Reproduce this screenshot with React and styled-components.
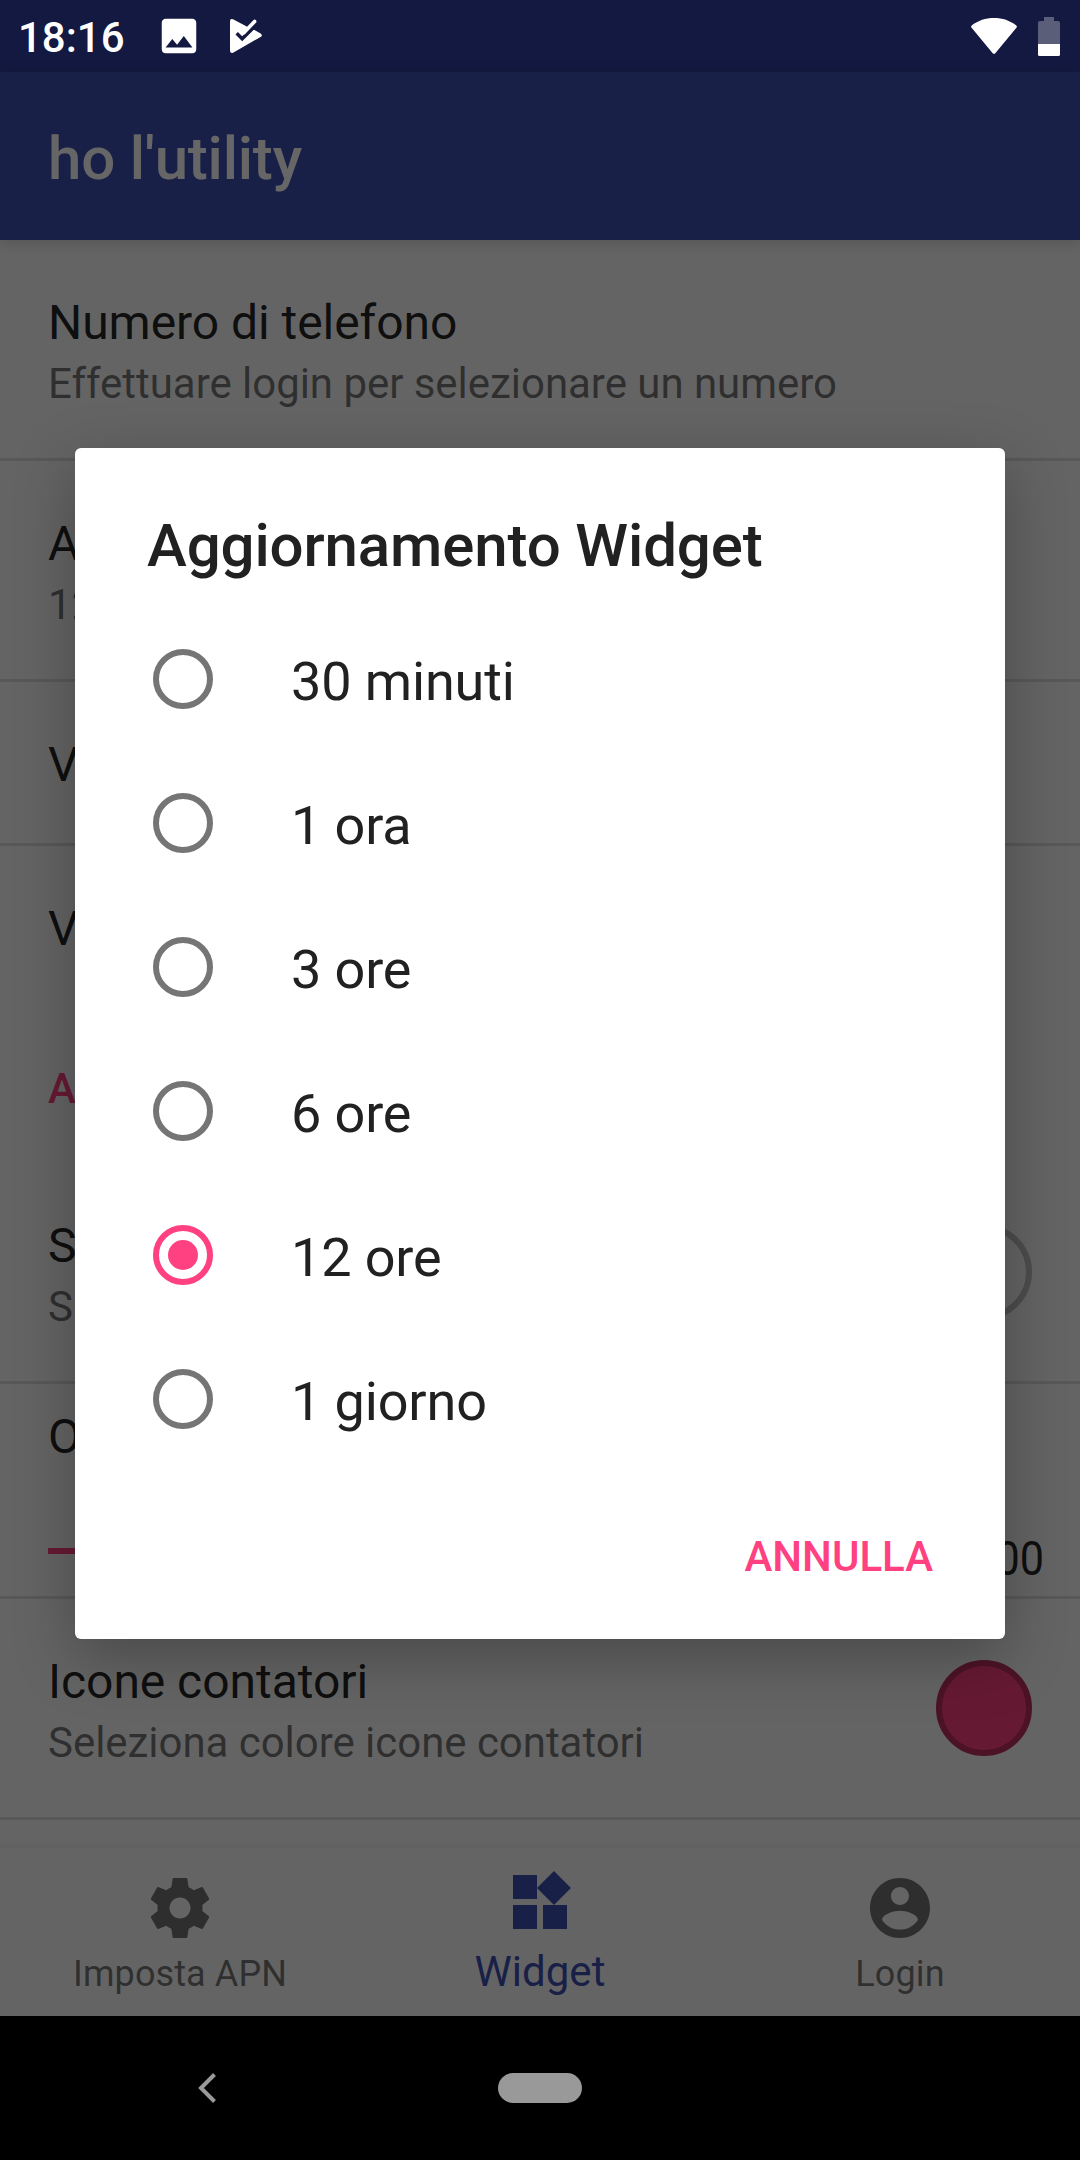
import React from "react";
import styled, { createGlobalStyle } from "styled-components";

const GlobalStyle = createGlobalStyle`
  * { box-sizing: border-box; }
  html, body { margin: 0; padding: 0; background: #000; }
  body { font-family: Roboto, sans-serif; font-weight: 400; overflow: hidden; }
  svg { display: block; flex: none; }
`;

const Device = styled.div`
  width: 1080px;
  height: 2160px;
  display: flex;
  flex-direction: column;
  overflow: hidden;
`;

const StatusBar = styled.header`
  flex: none;
  height: 72px;
  display: flex;
  align-items: center;
  padding: 0 20px 0 18px;
  background: #131940;
  color: #fff;
`;

const Clock = styled.span`
  width: 138px;
  font-size: 42px;
  font-weight: 500;
  line-height: 50px;
  padding-top: 4px;
  white-space: nowrap;
`;

const NotificationIcons = styled.div`
  flex: 1;
  display: flex;
  align-items: center;
  gap: 21px;
`;

const SystemIcons = styled.div`
  display: flex;
  align-items: center;
  gap: 21px;
`;

const AppWindow = styled.div`
  flex: none;
  position: relative;
  height: 1944px;
  display: flex;
  flex-direction: column;
  background: #fafafa;
`;

const AppBar = styled.div`
  flex: none;
  position: relative;
  height: 168px;
  display: flex;
  align-items: center;
  padding: 6px 48px 0;
  background: #3f51b5;
  box-shadow: 0 3px 14px rgba(0, 0, 0, 0.16);
`;

const AppTitle = styled.h1`
  margin: 0;
  font-size: 60px;
  font-weight: 500;
  line-height: 70px;
  letter-spacing: -0.2px;
  color: #fff;
`;

const Preferences = styled.main`
  flex: 1;
  min-height: 0;
  overflow: hidden;
`;

const Preference = styled.div`
  display: flex;
  justify-content: space-between;
  height: ${(p) => p.$height}px;
  padding: 55px 48px 0;
  border-bottom: 3px solid ${(p) => (p.$last ? "transparent" : "rgba(0, 0, 0, 0.12)")};
`;

const PreferenceTitle = styled.div`
  font-size: 48px;
  line-height: 56px;
  letter-spacing: -0.05px;
  color: rgba(0, 0, 0, 0.87);
  white-space: nowrap;
`;

const PreferenceSummary = styled.div`
  margin-top: 8px;
  font-size: 42px;
  line-height: 50px;
  letter-spacing: -0.04px;
  color: rgba(0, 0, 0, 0.54);
  white-space: nowrap;
`;

const ColorSwatch = styled.div`
  flex: none;
  width: 96px;
  height: 96px;
  margin-top: 6px;
  border-radius: 50%;
  background: ${(p) => p.$fill};
  border: 6px solid ${(p) => p.$edge};
`;

const Category = styled.div`
  height: 153px;
  padding: 54px 48px 0;
  font-size: 42px;
  font-weight: 500;
  line-height: 50px;
  color: #ff4081;
`;

const SliderPreference = styled.div`
  height: 215px;
  padding: 25px 36px 0 48px;
  border-bottom: 3px solid rgba(0, 0, 0, 0.12);
`;

const SliderRow = styled.div`
  display: flex;
  align-items: center;
  gap: 24px;
  margin-top: 59px;
  height: 70px;
`;

const SliderTrack = styled.div`
  flex: 1;
  height: 6px;
  margin-bottom: 16px;
  background: #ff4081;
`;

const SliderValue = styled.div`
  font-size: 48px;
  line-height: 56px;
  color: rgba(0, 0, 0, 0.87);
  transform: scaleX(0.9);
  transform-origin: right center;
`;

const BottomNav = styled.nav`
  flex: none;
  height: 168px;
  display: grid;
  grid-template-columns: repeat(3, 1fr);
  background: #fafafa;
  box-shadow: 0 -1px 8px rgba(0, 0, 0, 0.07);
  position: relative;
`;

const NavItem = styled.div`
  display: flex;
  flex-direction: column;
  align-items: center;
  padding-top: ${(p) => (p.$active ? 18 : 24)}px;
  color: ${(p) => (p.$active ? "#3f51b5" : "rgba(0, 0, 0, 0.54)")};
`;

const NavLabel = styled.span`
  margin-top: 9px;
  font-size: ${(p) => (p.$active ? 42 : 36)}px;
  line-height: ${(p) => (p.$active ? 50 : 42)}px;
  letter-spacing: ${(p) => (p.$active ? 0 : 0.1)}px;
  white-space: nowrap;
`;

const Scrim = styled.div`
  position: absolute;
  inset: 0;
  display: flex;
  justify-content: center;
  align-items: flex-start;
  padding-top: 376px;
  background: rgba(0, 0, 0, 0.6);
`;

const Dialog = styled.section`
  width: 930px;
  height: 1191px;
  display: flex;
  flex-direction: column;
  background: #fff;
  border-radius: 6px;
  box-shadow: 0 18px 62px rgba(0, 0, 0, 0.28);
  color: #212121;
`;

const DialogTitle = styled.h2`
  margin: 0;
  padding: 63px 72px 29px;
  font-size: 60px;
  font-weight: 500;
  line-height: 70px;
  letter-spacing: -0.13px;
`;

const Option = styled.label`
  display: flex;
  align-items: center;
  gap: 78px;
  height: 144px;
  padding-left: 78px;
  font-size: 54px;
  line-height: 64px;
  letter-spacing: -0.13px;
`;

const Radio = styled.span`
  width: 60px;
  height: 60px;
  margin-bottom: 6px;
  display: grid;
  place-items: center;
  border-radius: 50%;
  border: 6px solid ${(p) => (p.$checked ? "#ff4081" : "#757575")};

  &::after {
    content: "";
    width: 30px;
    height: 30px;
    border-radius: 50%;
    background: ${(p) => (p.$checked ? "#ff4081" : "transparent")};
  }
`;

const DialogActions = styled.div`
  display: flex;
  justify-content: flex-end;
  padding: 58px 72px 0;
`;

const TextButton = styled.button`
  border: 0;
  padding: 0;
  background: none;
  font: 500 42px/50px Roboto, sans-serif;
  color: #ff4081;
`;

const NavigationBar = styled.footer`
  flex: none;
  height: 144px;
  display: grid;
  grid-template-columns: 414px 252px 414px;
  align-items: center;
  justify-items: center;
  background: #000;
`;

const HomePill = styled.div`
  width: 84px;
  height: 30px;
  border-radius: 15px;
  background: #999;
`;

const PictureIcon = () => (
  <svg width="46" height="46" viewBox="0 0 24 24" fill="#fff">
    <path d="M21 19V5c0-1.1-.9-2-2-2H5c-1.1 0-2 .9-2 2v14c0 1.1.9 2 2 2h14c1.1 0 2-.9 2-2zM8.5 13.5l2.5 3.01L14.5 12l4.5 6H5l3.500-4.500z" />
  </svg>
);

const PlayCheckIcon = () => (
  <svg width="46" height="46" viewBox="0 0 46 46">
    <path
      d="M7 8Q7 5.200 10 6.200L23.300 13.200L26 16L31.500 17L37.600 20.400Q40.200 22.200 37.600 24L10.500 39.400Q7 41 7 37.500Z"
      fill="#fff"
    />
    <path d="M13.700 20.300L19.200 25.800L32.500 12.500" fill="none" stroke="#131940" strokeWidth="3.400" />
    <path d="M20.800 19.700L31.600 8.400" fill="none" stroke="#fff" strokeWidth="3.600" strokeLinecap="round" />
  </svg>
);

const WifiIcon = () => (
  <svg width="46" height="36" viewBox="0 0 46 36">
    <path
      d="M1 7.200C7 2.600 14.500 0 23 0s16 2.600 22 7.200q1.600 1.200.4 2.600L24.500 35q-1.500 1.700-3 0L.6 9.800Q-.6 8.400 1 7.200z"
      fill="#fff"
    />
  </svg>
);

const BatteryIcon = () => (
  <svg width="22" height="39" viewBox="0 0 22 39">
    <path d="M6 0h10v4h4q2 0 2 2v21H0V6q0-2 2-2h4z" fill="#fff" fillOpacity=".3" />
    <path d="M0 27h22v10.500q0 1.500-1.500 1.500h-19Q0 39 0 37.500z" fill="#fff" />
  </svg>
);

const BackIcon = () => (
  <svg width="20" height="32" viewBox="0 0 20 32">
    <path d="M17.500 2.500L4 16L17.500 29.500" fill="none" stroke="#999" strokeWidth="4" />
  </svg>
);

const icons = {
  settings:
    "M19.43 12.98c.04-.32.07-.64.07-.98s-.03-.66-.07-.98l2.110-1.650c.19-.15.24-.42.12-.64l-2-3.460c-.12-.22-.39-.3-.61-.22l-2.490 1c-.52-.4-1.080-.73-1.690-.98l-.38-2.650C14.460 2.180 14.250 2 14 2h-4c-.25 0-.46.18-.49.42l-.38 2.650c-.61.25-1.170.59-1.690.98l-2.490-1c-.23-.09-.49 0-.61.22l-2 3.460c-.13.22-.07.49.12.64l2.110 1.650c-.04.32-.07.65-.07.98s.03.66.07.98l-2.110 1.650c-.19.15-.24.42-.12.64l2 3.460c.12.22.39.3.61.22l2.490-1c.52.4 1.080.73 1.690.98l.38 2.650c.03.24.24.42.49.42h4c.25 0 .46-.18.49-.42l.38-2.650c.61-.25 1.170-.59 1.690-.98l2.490 1c.23.09.49 0 .61-.22l2-3.460c.12-.22.07-.49-.12-.64l-2.110-1.650zM12 15.500c-1.930 0-3.500-1.570-3.500-3.500s1.570-3.500 3.500-3.500 3.500 1.570 3.500 3.500-1.570 3.500-3.500 3.500z",
  widgets:
    "M13 13v8h8v-8h-8zM3 21h8v-8H3v8zM3 3v8h8V3H3zm13.660-1.310L11 7.340 16.660 13l5.660-5.660-5.660-5.650z",
  account:
    "M12 2C6.480 2 2 6.480 2 12s4.480 10 10 10 10-4.480 10-10S17.520 2 12 2zm0 3c1.660 0 3 1.340 3 3s-1.340 3-3 3-3-1.340-3-3 1.340-3 3-3zm0 14.200c-2.500 0-4.710-1.280-6-3.220.03-1.990 4-3.080 6-3.080 1.990 0 5.970 1.090 6 3.080-1.290 1.940-3.500 3.220-6 3.220z",
};

const navItems = [
  { label: "Imposta APN", icon: "settings" },
  { label: "Widget", icon: "widgets", active: true },
  { label: "Login", icon: "account" },
];

const options = ["30 minuti", "1 ora", "3 ore", "6 ore", "12 ore", "1 giorno"];

function PreferenceItem({ title, summary, height = 221, last, children }) {
  return (
    <Preference $height={height} $last={last}>
      <div>
        <PreferenceTitle>{title}</PreferenceTitle>
        {summary && <PreferenceSummary>{summary}</PreferenceSummary>}
      </div>
      {children}
    </Preference>
  );
}

export default function App() {
  return (
    <Device>
      <GlobalStyle />
      <StatusBar>
        <Clock>18:16</Clock>
        <NotificationIcons>
          <PictureIcon />
          <PlayCheckIcon />
        </NotificationIcons>
        <SystemIcons>
          <WifiIcon />
          <BatteryIcon />
        </SystemIcons>
      </StatusBar>
      <AppWindow>
        <AppBar>
          <AppTitle>ho l'utility</AppTitle>
        </AppBar>
        <Preferences>
          <PreferenceItem
            title="Numero di telefono"
            summary="Effettuare login per selezionare un numero"
          />
          <PreferenceItem title="A" summary="12" />
          <PreferenceItem title="V" height={164} />
          <PreferenceItem title="V" height={164} last />
          <Category>A</Category>
          <PreferenceItem title="S" summary="S">
            <ColorSwatch $fill="transparent" $edge="#c0c0c0" />
          </PreferenceItem>
          <SliderPreference>
            <PreferenceTitle>O</PreferenceTitle>
            <SliderRow>
              <SliderTrack />
              <SliderValue>00</SliderValue>
            </SliderRow>
          </SliderPreference>
          <PreferenceItem title="Icone contatori" summary="Seleziona colore icone contatori">
            <ColorSwatch $fill="#ff4081" $edge="#bf3061" />
          </PreferenceItem>
        </Preferences>
        <BottomNav>
          {navItems.map(({ label, icon, active }) => (
            <NavItem key={label} $active={active}>
              <svg width="72" height="72" viewBox="0 0 24 24" fill="currentColor">
                <path d={icons[icon]} />
              </svg>
              <NavLabel $active={active}>{label}</NavLabel>
            </NavItem>
          ))}
        </BottomNav>
        <Scrim>
          <Dialog role="dialog">
            <DialogTitle>Aggiornamento Widget</DialogTitle>
            {options.map((option) => (
              <Option key={option}>
                <Radio $checked={option === "12 ore"} />
                {option}
              </Option>
            ))}
            <DialogActions>
              <TextButton>ANNULLA</TextButton>
            </DialogActions>
          </Dialog>
        </Scrim>
      </AppWindow>
      <NavigationBar>
        <BackIcon />
        <HomePill />
      </NavigationBar>
    </Device>
  );
}
